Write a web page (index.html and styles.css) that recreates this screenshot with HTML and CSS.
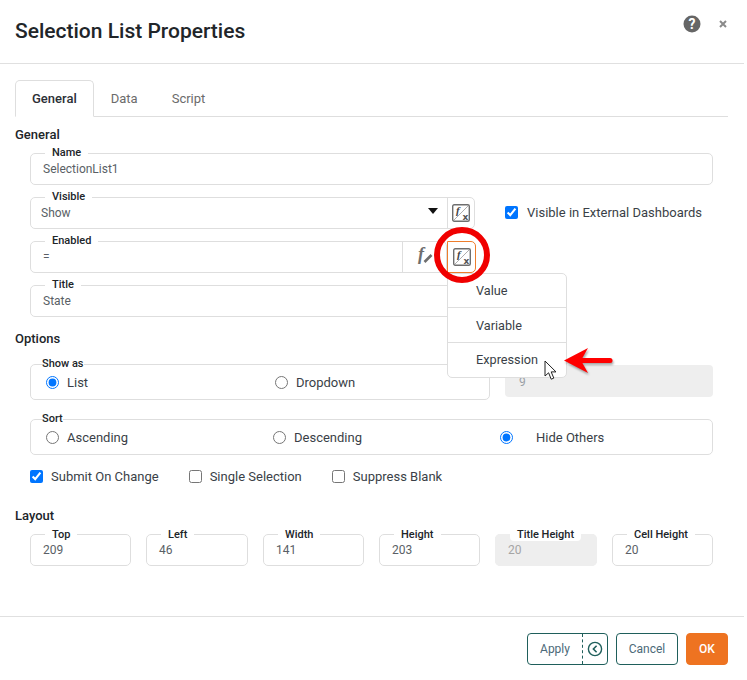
FILE: index.html
```html
<!DOCTYPE html>
<html lang="en">
<head>
    <meta charset="UTF-8">
    <meta name="viewport" content="width=device-width, initial-scale=1.0">
    <title>Selection List Properties</title>
    <link rel="stylesheet" href="styles.css">
</head>
<body>
    <div class="dialog">
        <header class="dialog-header">
            <h1>Selection List Properties</h1>
            <div class="header-tools">
                <svg class="help-icon" width="18" height="18" viewBox="0 0 18 18">
                    <circle cx="9" cy="9" r="8.5" fill="#666"/>
                    <text x="9" y="13.5" text-anchor="middle" class="help-mark">?</text>
                </svg>
                <svg class="close-icon" width="8" height="8" viewBox="0 0 8 8">
                    <path d="M1 1l6 6M7 1L1 7" stroke="#8a8a8a" stroke-width="2" fill="none"/>
                </svg>
            </div>
        </header>

        <main class="dialog-body">
            <nav class="tabs">
                <a class="tab active">General</a>
                <a class="tab">Data</a>
                <a class="tab">Script</a>
            </nav>

            <h2 class="section-title first">General</h2>
            <fieldset class="field full">
                <legend>Name</legend>
                <div class="value">SelectionList1</div>
            </fieldset>

            <div class="row">
                <fieldset class="field field-flex wide">
                    <legend>Visible</legend>
                    <div class="value grow tight">Show</div>
                    <span class="caret"></span>
                    <span class="fx-cell">
                        <svg class="fx-icon" width="18" height="18" viewBox="0 0 18 18">
                            <rect x="0.7" y="0.7" width="16.6" height="16.6" rx="1.5" fill="none" stroke="#6e6e6e" stroke-width="1.4"/>
                            <path d="M2 16L16 2" stroke="#999" stroke-width="0.8"/>
                            <text x="4" y="10" class="fx-f">f</text>
                            <text x="10.5" y="16" class="fx-x">x</text>
                        </svg>
                    </span>
                </fieldset>
                <label class="check external">
                    <input type="checkbox" checked>
                    <span>Visible in External Dashboards</span>
                </label>
            </div>

            <div class="row">
                <fieldset class="field field-flex medium">
                    <legend>Enabled</legend>
                    <div class="value grow">=</div>
                    <span class="wand-cell">
                        <svg width="22" height="24" viewBox="0 0 22 24">
                            <text x="5" y="16" class="wand-f">f</text>
                            <path d="M11.5 18L18.5 11" stroke="#6e6e6e" stroke-width="2.6"/>
                        </svg>
                    </span>
                </fieldset>
                <span class="fx-button">
                    <svg class="fx-icon" width="18" height="18" viewBox="0 0 18 18">
                        <rect x="0.7" y="0.7" width="16.6" height="16.6" rx="1.5" fill="none" stroke="#6e6e6e" stroke-width="1.4"/>
                        <path d="M2 16L16 2" stroke="#999" stroke-width="0.8"/>
                        <text x="4" y="10" class="fx-f">f</text>
                        <text x="10.5" y="16" class="fx-x">x</text>
                    </svg>
                </span>
            </div>

            <fieldset class="field wide">
                <legend>Title</legend>
                <div class="value">State</div>
            </fieldset>

            <h2 class="section-title options">Options</h2>
            <div class="row show-row">
                <fieldset class="field group show-as">
                    <legend>Show as</legend>
                    <div class="radio-grid two">
                        <label class="radio"><input type="radio" name="show" checked><span>List</span></label>
                        <label class="radio"><input type="radio" name="show"><span>Dropdown</span></label>
                    </div>
                </fieldset>
                <div class="disabled-box">9</div>
            </div>

            <fieldset class="field group full sort">
                <legend>Sort</legend>
                <div class="radio-grid three">
                    <label class="radio"><input type="radio" name="sort"><span>Ascending</span></label>
                    <label class="radio"><input type="radio" name="sort"><span>Descending</span></label>
                    <label class="radio far"><input type="radio" name="sort" checked><span>Hide Others</span></label>
                </div>
            </fieldset>

            <div class="check-row">
                <label class="check"><input type="checkbox" checked><span>Submit On Change</span></label>
                <label class="check"><input type="checkbox"><span>Single Selection</span></label>
                <label class="check"><input type="checkbox"><span>Suppress Blank</span></label>
            </div>

            <h2 class="section-title layout">Layout</h2>
            <div class="layout-grid">
                <fieldset class="field"><legend>Top</legend><div class="value">209</div></fieldset>
                <fieldset class="field"><legend>Left</legend><div class="value">46</div></fieldset>
                <fieldset class="field"><legend>Width</legend><div class="value">141</div></fieldset>
                <fieldset class="field"><legend>Height</legend><div class="value">203</div></fieldset>
                <fieldset class="field off"><legend>Title Height</legend><div class="value">20</div></fieldset>
                <fieldset class="field"><legend>Cell Height</legend><div class="value">20</div></fieldset>
            </div>
        </main>

        <footer class="dialog-footer">
            <div class="btn apply">
                <span class="apply-label">Apply</span>
                <span class="apply-arrow">
                    <svg width="16" height="16" viewBox="0 0 16 16">
                        <circle cx="8" cy="8" r="6.6" fill="none" stroke="#1f5f5b" stroke-width="1.4"/>
                        <path d="M9.6 4.8L6.4 8l3.2 3.2" fill="none" stroke="#1f5f5b" stroke-width="1.6"/>
                    </svg>
                </span>
            </div>
            <div class="btn cancel">Cancel</div>
            <div class="btn ok">OK</div>
        </footer>

        <!-- menu and the callouts drawn over the dialog -->
        <ul class="menu">
            <li>Value</li>
            <li>Variable</li>
            <li>Expression</li>
        </ul>
        <div class="red-ring"></div>
        <svg class="red-arrow" width="52" height="28" viewBox="0 0 52 28">
            <path d="M1 13.5L25 1l-7 12.5L25 26z" fill="#f00"/>
            <path d="M17 13.5h30" stroke="#f00" stroke-width="5" stroke-linecap="round"/>
        </svg>
        <svg class="cursor" width="14" height="21" viewBox="0 0 14 21">
            <path d="M1 1v15l3.6-3.2 2.6 6.4 2.6-1.1-2.6-6.2H12z" fill="#fff" stroke="#222" stroke-width="1"/>
        </svg>
    </div>
</body>
</html>
```

FILE: styles.css
```css
* {
    box-sizing: border-box;
}

body {
    margin: 0;
    background: #fff;
    font-family: Roboto, "Liberation Sans", sans-serif;
    font-size: 13px;
    color: #2b2f36;
}

.dialog {
    position: relative;
    width: 744px;
    height: 680px;
}

/* header */
.dialog-header {
    height: 64px;
    border-bottom: 1px solid #e0e0e0;
    padding: 0 16px 0 15px;
    display: flex;
    align-items: center;
    justify-content: space-between;
}

.dialog-header h1 {
    margin: 0 0 2px;
    font-size: 21px;
    font-weight: 500;
    color: #212529;
}

.header-tools {
    display: flex;
    align-items: center;
    gap: 18px;
    margin: 0 1px 16px 0;
}

.help-mark {
    font-size: 14px;
    font-weight: 700;
    fill: #fff;
}

/* tabs */
.dialog-body {
    padding: 16px 16px 0 15px;
}

.tabs {
    display: flex;
    height: 37px;
    border-bottom: 1px solid #dedede;
}

.tab {
    height: 36px;
    padding: 0 17px;
    line-height: 37px;
    color: #6b6b6b;
}

.tab.active {
    height: 37px;
    padding: 0 16px;
    color: #2b2f36;
    font-weight: 500;
    background: #fff;
    border: 1px solid #dedede;
    border-bottom-color: #fff;
    border-radius: 5px 5px 0 0;
    line-height: 35px;
}

.section-title {
    margin: 0;
    font-size: 13px;
    line-height: 16px;
    font-weight: 500;
    color: #212529;
}

.section-title.first {
    margin: 10px 0 4px;
}

.section-title.options {
    margin: 14px 0 11px;
}

.section-title.layout {
    margin: 23px 0 4px;
}

/* fields */
.field {
    min-width: 0;
    margin: 0 0 6px 15px;
    padding: 0 12px;
    border: 1px solid #dedede;
    border-radius: 5px;
}

.field.full {
    width: 683px;
}

.field legend {
    margin-left: 2px;
    padding: 0 7px 2px;
    font-size: 11px;
    line-height: 11px;
    font-weight: 500;
    color: #212529;
    white-space: nowrap;
}

.value {
    height: 24px;
    font-size: 12px;
    line-height: 18px;
    color: #5a5f66;
}

.value.tight {
    margin-left: -2px;
}

.row {
    display: flex;
    align-items: flex-start;
}

.wide {
    width: 445px;
}

.medium {
    width: 417px;
    flex: none;
}

.field-flex {
    display: flex;
    flex: none;
    padding-right: 0;
}

.grow {
    flex: 1;
}

.caret {
    width: 0;
    height: 0;
    margin: 4px 9px 0 0;
    border-left: 5.5px solid transparent;
    border-right: 5.5px solid transparent;
    border-top: 6px solid #111;
}

.fx-cell {
    width: 27px;
    height: 31px;
    margin-top: -7px;
    border-left: 1px solid #dedede;
    display: flex;
    align-items: center;
    justify-content: center;
}

.fx-button {
    flex: none;
    width: 29px;
    height: 32px;
    margin: 6px 0 0;
    padding-bottom: 1px;
    border: 1px solid #ee7d2b;
    border-radius: 0 5px 5px 0;
    display: flex;
    align-items: center;
    justify-content: center;
}

.fx-f {
    font-family: "Liberation Serif", serif;
    font-size: 11px;
    font-style: italic;
    font-weight: 700;
    fill: #444;
}

.fx-x {
    font-family: "DejaVu Sans", sans-serif;
    font-size: 9px;
    font-weight: 700;
    fill: #555;
}

.wand-cell {
    width: 44px;
    height: 31px;
    margin-top: -7px;
    border-left: 1px solid #dedede;
    padding: 3px 0 0 10px;
}

.wand-f {
    font-family: "Liberation Serif", serif;
    font-size: 18px;
    font-style: italic;
    font-weight: 700;
    fill: #6e6e6e;
}

/* checks and radios */
.check,
.radio {
    display: flex;
    align-items: center;
    color: #3a3f47;
    white-space: nowrap;
}

.check input,
.radio input {
    flex: none;
    margin: 0;
}

.check span {
    margin-left: 8px;
}

.radio span {
    margin-left: 8px;
}

.radio.far span {
    margin-left: 23px;
}

.external {
    margin: 12px 0 0 30px;
    height: 18px;
}

.external span {
    margin-left: 9px;
}

.group {
    padding: 0 15px;
}

.group legend {
    margin-left: -4px;
    padding: 0 0 2px;
}

.radio-grid {
    display: grid;
    height: 28px;
    padding-top: 2px;
}

.radio-grid label {
    height: 18px;
}

.radio-grid.two {
    grid-template-columns: 229px 1fr;
}

.radio-grid.three {
    grid-template-columns: 227px 227px 1fr;
}

.show-row {
    margin-bottom: 13px;
}

.show-as {
    width: 460px;
    flex: none;
    margin-bottom: 0;
}

.disabled-box {
    flex: 1;
    height: 32px;
    margin: 7px 15px 0 15px;
    padding: 9px 14px;
    border-radius: 4px;
    background: #eee;
    font-size: 12px;
    line-height: 16px;
    color: #9aa0a6;
}

.sort {
    margin-bottom: 0;
}

.check-row {
    display: flex;
    gap: 30px;
    margin: 12px 0 0 15px;
    height: 18px;
}

/* layout numbers */
.layout-grid {
    display: grid;
    grid-template-columns: 101px 102px 101px 101px 102px 101px;
    column-gap: 15px;
    margin-left: 15px;
}

.layout-grid .field {
    margin: 0;
}

.layout-grid .field legend {
    padding-bottom: 0;
    line-height: 13px;
}

.field.off {
    background: #eee;
    border-color: #eee;
}

.field.off legend {
    background: #fff;
    border-radius: 0 0 4px 4px;
}

.field.off .value {
    color: #a5a5a5;
}

/* footer */
.dialog-footer {
    position: absolute;
    left: 0;
    right: 0;
    top: 616px;
    height: 64px;
    border-top: 1px solid #e0e0e0;
    padding: 16px 16px 0 0;
    display: flex;
    justify-content: flex-end;
    gap: 8px;
}

.btn {
    height: 32px;
    border: 1px solid #1f5f5b;
    border-radius: 4px;
    font-size: 12px;
    line-height: 30px;
    text-align: center;
    color: #4c6a78;
}

.apply {
    width: 81px;
    display: flex;
}

.apply-label {
    flex: 1;
}

.apply-arrow {
    width: 25px;
    border-left: 1px dashed #1f5f5b;
    display: flex;
    align-items: center;
    justify-content: center;
}

.cancel {
    width: 62px;
}

.ok {
    width: 42px;
    border-color: #ee7321;
    background: #ee7321;
    color: #fff;
    font-weight: 500;
}

/* overlays */
.menu {
    position: absolute;
    left: 447px;
    top: 273px;
    width: 120px;
    margin: 0;
    padding: 0;
    list-style: none;
    background: #fff;
    border: 1px solid #dedede;
    border-radius: 5px;
    font-size: 12.7px;
    color: #3a3f47;
}

.menu li {
    height: 35px;
    padding-left: 28px;
    line-height: 33px;
    border-bottom: 1px solid #dedede;
}

.menu li:first-child {
    height: 34px;
}

.menu li:nth-child(2) {
    line-height: 35px;
}

.menu li:last-child {
    height: 34px;
    border-bottom: 0;
}

.red-ring {
    position: absolute;
    left: 434px;
    top: 227px;
    width: 56px;
    height: 56px;
    border: 6px solid #f00000;
    border-radius: 50%;
}

.red-arrow {
    position: absolute;
    left: 563px;
    top: 347px;
    filter: drop-shadow(1px 2px 1px rgba(0, 0, 0, 0.35));
}

.cursor {
    position: absolute;
    left: 544px;
    top: 360px;
}
```
